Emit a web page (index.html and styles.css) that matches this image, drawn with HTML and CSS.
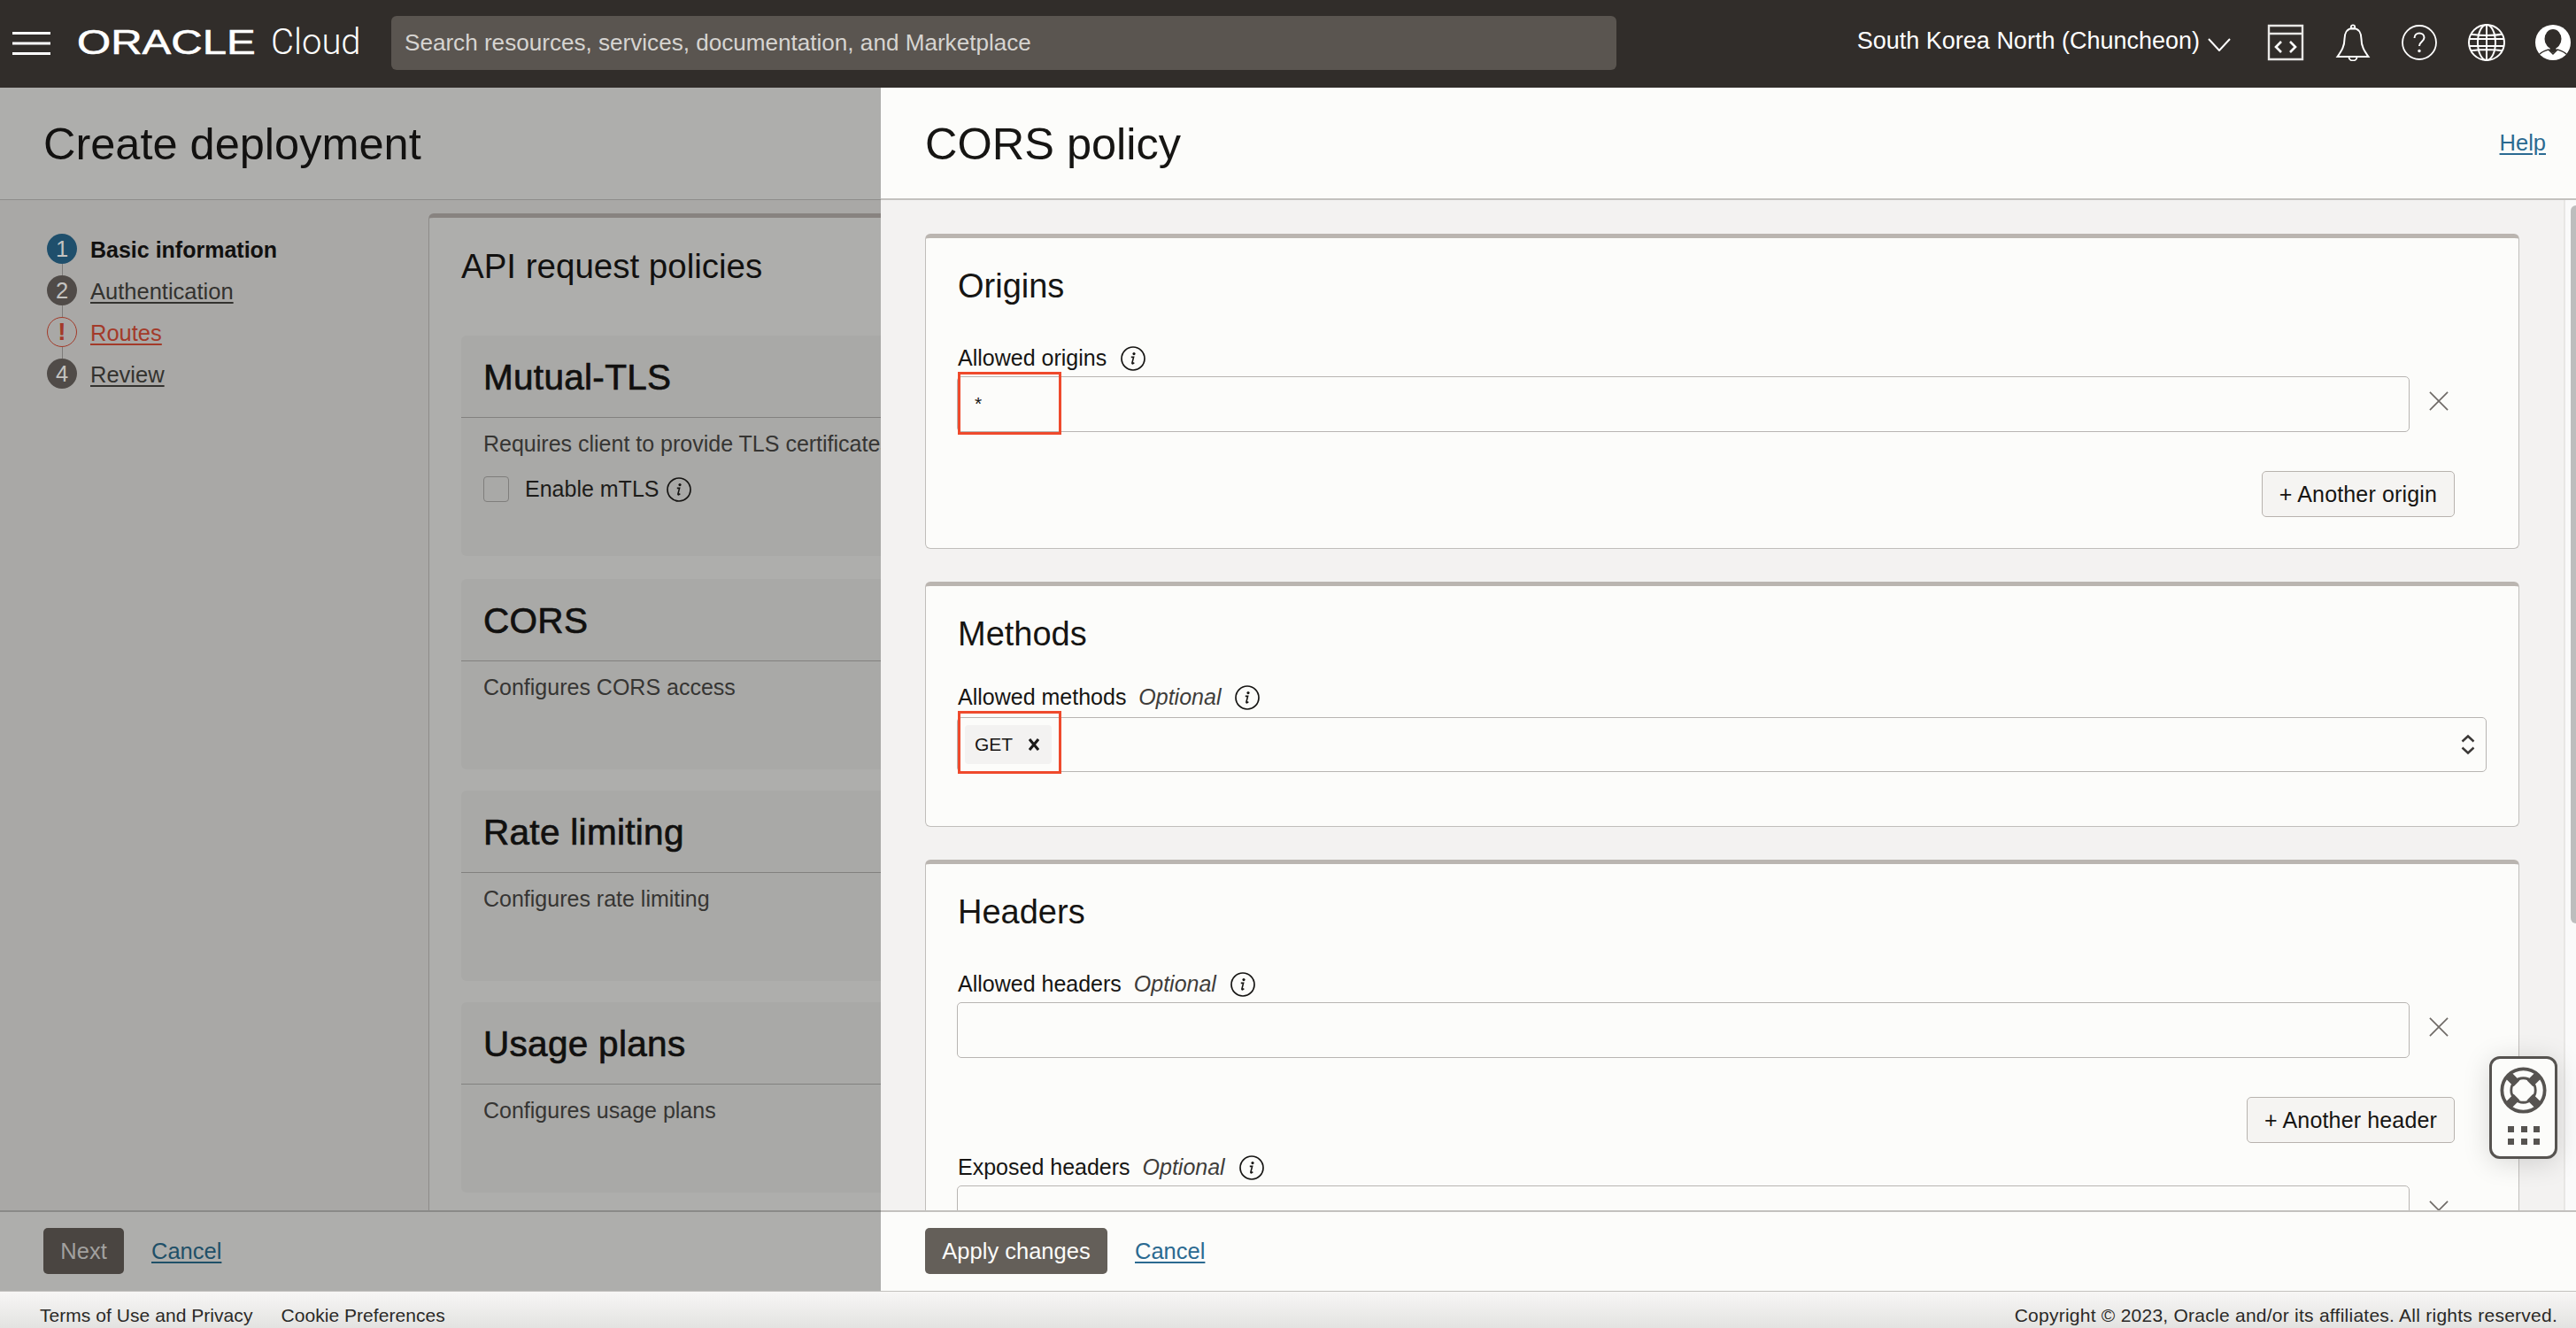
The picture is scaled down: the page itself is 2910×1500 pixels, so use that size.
FILE: index.html
```html
<!DOCTYPE html>
<html lang="en">
<head>
  <meta charset="UTF-8">
  <title>CORS policy</title>
  <link rel="stylesheet" href="styles.css">
</head>
<body>

  <!-- shared icons -->
  <svg class="icon-defs" xmlns="http://www.w3.org/2000/svg">
    <symbol id="icon-info" viewBox="0 0 28 28">
      <circle cx="14" cy="14" r="13" fill="none" stroke="currentColor" stroke-width="1.7"/>
      <circle cx="15" cy="8.600" r="1.600" fill="currentColor"/>
      <path d="M11.800 12.400h2.800l-1.700 6.600c-.2.900.5 1.100 1.100.7l1.300-1" fill="none" stroke="currentColor" stroke-width="1.600"/>
    </symbol>
    <symbol id="icon-close" viewBox="0 0 24 24">
      <path d="M1 1l22 22M23 1L1 23" fill="none" stroke="currentColor" stroke-width="1.8"/>
    </symbol>
  </svg>

  <header class="topbar">
    <svg class="menu-icon" viewBox="0 0 43 26" aria-hidden="true">
      <path d="M0 1.500h43M0 13h43M0 24.500h43" stroke="#fff" stroke-width="3"/>
    </svg>
    <div class="logo">
      <span class="logo-oracle">ORACLE</span>
      <span class="logo-cloud">Cloud</span>
    </div>
    <div class="search">Search resources, services, documentation, and Marketplace</div>
    <div class="region">South Korea North (Chuncheon)</div>
    <svg class="region-chevron" viewBox="0 0 26 15" aria-hidden="true">
      <path d="M1 1l12 13L25 1" fill="none" stroke="#fff" stroke-width="2"/>
    </svg>
    <div class="topbar-icons">
      <svg viewBox="0 0 42 42" aria-hidden="true">
        <path d="M2 2h38v38H2zM2 11h38" fill="none" stroke="#e8e7e5" stroke-width="2.400"/>
        <path d="M16 20l-6 6 6 6M26 20l6 6-6 6" fill="none" stroke="#fff" stroke-width="2.600"/>
      </svg>
      <svg viewBox="0 0 42 42" aria-hidden="true">
        <path d="M21 5c7 0 9.500 6 9.500 12 0 8 3 13 8 20H3.500c5-7 8-12 8-20 0-6 2.500-12 9.500-12z" fill="none" stroke="#fff" stroke-width="2"/>
        <circle cx="21" cy="3.500" r="2.200" fill="none" stroke="#fff" stroke-width="1.800"/>
        <path d="M16.500 37.500a4.500 4 0 0 0 9 0" fill="none" stroke="#fff" stroke-width="1.800"/>
      </svg>
      <svg viewBox="0 0 42 42" aria-hidden="true">
        <circle cx="21" cy="21" r="19" fill="none" stroke="#fff" stroke-width="1.800"/>
        <path d="M15.500 16c0-3.500 2.500-5.500 5.500-5.500s5.500 2 5.500 5c0 4.500-5.500 4.500-5.500 9.500" fill="none" stroke="#fff" stroke-width="2"/>
        <circle cx="21" cy="30.500" r="1.700" fill="#fff"/>
      </svg>
      <svg viewBox="0 0 42 42" aria-hidden="true">
        <g fill="none" stroke="#fff" stroke-width="2">
          <circle cx="21" cy="21" r="20"/>
          <ellipse cx="21" cy="21" rx="10" ry="20"/>
          <path d="M21 1v40M3 11.500c10 2 26 2 36 0M1.200 17h39.600M1.200 25h39.600M3 30.500c10-2 26-2 36 0"/>
        </g>
      </svg>
      <svg viewBox="0 0 42 42" aria-hidden="true">
        <circle cx="21" cy="21" r="20" fill="#fff"/>
        <ellipse cx="21" cy="17" rx="9.500" ry="11" fill="#312d2a"/>
        <path d="M18 26h6l1 4-4 3-4-3z" fill="#312d2a"/>
        <path d="M6 34c3-3 7-4 10-5l5 5 5-5c3 1 7 2 10 5" fill="none" stroke="#312d2a" stroke-width="1.500"/>
      </svg>
    </div>
  </header>

  <div class="workspace">

    <!-- page behind the drawer, dimmed -->
    <section class="wizard">
      <div class="wizard-title">
        <h1>Create deployment</h1>
      </div>
      <div class="wizard-body">
        <ol class="steps">
          <li class="step step-current"><span class="step-dot">1</span><span class="step-name">Basic information</span></li>
          <li class="step"><span class="step-dot">2</span><a class="step-name">Authentication</a></li>
          <li class="step step-error"><span class="step-dot">!</span><a class="step-name">Routes</a></li>
          <li class="step"><span class="step-dot">4</span><a class="step-name">Review</a></li>
        </ol>
        <div class="wizard-card">
          <h2 class="wizard-card-title">API request policies</h2>
          <div class="policy policy-mtls">
            <h3>Mutual-TLS</h3>
            <p>Requires client to provide TLS certificates</p>
            <div class="check-row">
              <span class="checkbox"></span>
              <span>Enable mTLS</span>
              <svg class="info-icon"><use href="#icon-info"/></svg>
            </div>
          </div>
          <div class="policy">
            <h3>CORS</h3>
            <p>Configures CORS access</p>
          </div>
          <div class="policy">
            <h3>Rate limiting</h3>
            <p>Configures rate limiting</p>
          </div>
          <div class="policy">
            <h3>Usage plans</h3>
            <p>Configures usage plans</p>
          </div>
        </div>
      </div>
      <div class="wizard-actions">
        <button class="btn-dark btn-next">Next</button>
        <a class="cancel-link">Cancel</a>
      </div>
    </section>

    <!-- CORS drawer -->
    <section class="drawer">
      <div class="drawer-head">
        <h1>CORS policy</h1>
        <a class="help-link">Help</a>
      </div>

      <div class="drawer-scroll">
        <div class="drawer-content">

          <div class="card">
            <h2>Origins</h2>
            <div class="field-label">Allowed origins <svg class="info-icon"><use href="#icon-info"/></svg></div>
            <div class="input-row">
              <div class="input">*</div>
              <svg class="remove-icon"><use href="#icon-close"/></svg>
              <span class="callout"></span>
            </div>
            <div class="add-row"><button class="btn-add">+ Another origin</button></div>
          </div>

          <div class="card card-methods">
            <h2>Methods</h2>
            <div class="field-label">Allowed methods <em>Optional</em> <svg class="info-icon"><use href="#icon-info"/></svg></div>
            <div class="select">
              <span class="chip">GET
                <svg class="chip-x" viewBox="0 0 12 14"><path d="M1 1l10 12M11 1L1 13" fill="none" stroke="#1c1b1a" stroke-width="3"/></svg>
              </span>
              <svg class="select-arrows" viewBox="0 0 16 24" aria-hidden="true">
                <path d="M1.500 8.500L8 2.500l6.500 6M1.500 15.500L8 21.500l6.500-6" fill="none" stroke="#3b3836" stroke-width="2.400"/>
              </svg>
              <span class="callout"></span>
            </div>
          </div>

          <div class="card">
            <h2>Headers</h2>
            <div class="field-label">Allowed headers <em>Optional</em> <svg class="info-icon"><use href="#icon-info"/></svg></div>
            <div class="input-row">
              <div class="input"></div>
              <svg class="remove-icon"><use href="#icon-close"/></svg>
            </div>
            <div class="add-row"><button class="btn-add">+ Another header</button></div>
            <div class="field-label field-label-next">Exposed headers <em>Optional</em> <svg class="info-icon"><use href="#icon-info"/></svg></div>
            <div class="input-row">
              <div class="input"></div>
              <svg class="remove-icon"><use href="#icon-close"/></svg>
            </div>
          </div>

        </div>
        <div class="scrollbar"><div class="scrollbar-thumb"></div></div>
      </div>

      <div class="drawer-actions">
        <button class="btn-dark btn-apply">Apply changes</button>
        <a class="cancel-link">Cancel</a>
      </div>
    </section>
  </div>

  <footer class="page-footer">
    <a>Terms of Use and Privacy</a>
    <a>Cookie Preferences</a>
    <span class="copyright">Copyright © 2023, Oracle and/or its affiliates. All rights reserved.</span>
  </footer>

  <!-- floating help widget -->
  <div class="help-widget">
    <svg class="buoy" viewBox="0 0 56 56" aria-hidden="true">
      <circle cx="28" cy="28" r="25.500" fill="none" stroke="#565350" stroke-width="4"/>
      <circle cx="28" cy="28" r="14.500" fill="none" stroke="#565350" stroke-width="3"/>
      <path d="M10 10l10 10M46 10L36 20M10 46l10-10M46 46L36 36" stroke="#565350" stroke-width="10"/>
    </svg>
    <div class="widget-dots">
      <i></i><i></i><i></i><i></i><i></i><i></i>
    </div>
  </div>

</body>
</html>
```

FILE: styles.css
```css
* {
  box-sizing: border-box;
}

body {
  margin: 0;
  width: 100%;
  height: 100vh;
  overflow: hidden;
  position: relative;
  display: flex;
  flex-direction: column;
  font-family: "Liberation Sans", Arial, sans-serif;
  font-size: 25.500px;
  color: #161513;
  background: #fcfcfa;
}

h1, h2, h3, p {
  margin: 0;
  font-weight: normal;
}

.icon-defs {
  display: none;
}

/* top bar */
.topbar {
  height: 99px;
  flex: none;
  display: flex;
  align-items: center;
  background: #312d2a;
  color: #fff;
  padding-left: 14px;
  padding-right: 5px;
}

.menu-icon {
  width: 43px;
  height: 26px;
  margin-top: -2px;
}

.logo {
  display: flex;
  align-items: baseline;
  margin-left: 30px;
  width: 355px;
  margin-top: -3px;
}

.logo-oracle {
  font-size: 38px;
  line-height: 40px;
  width: 219px;
  display: inline-block;
  transform: scaleX(1.29);
  transform-origin: left center;
  -webkit-text-stroke: 0.6px #fff;
}

.logo-cloud {
  font-family: Roboto, "Liberation Sans", sans-serif;
  font-weight: 300;
  font-size: 40px;
  line-height: 40px;
}

.search {
  width: 1384px;
  height: 61px;
  line-height: 60px;
  padding-left: 15px;
  background: #5a5550;
  border-radius: 6px;
  color: #d6d4d1;
  font-size: 26.100px;
  margin-top: -2px;
}

.region {
  margin-left: auto;
  font-size: 27px;
  margin-top: -6px;
}

.region-chevron {
  width: 26px;
  height: 15px;
  margin-left: 9px;
  margin-right: 41px;
  margin-top: 2px;
}

.topbar-icons {
  display: flex;
  gap: 33.500px;
  margin-top: -3px;
}

.topbar-icons svg {
  width: 42px;
  height: 42px;
}

/* main split */
.workspace {
  height: 1359px;
  flex: none;
  display: flex;
}

/* wizard behind the drawer */
.wizard {
  width: 995px;
  flex: none;
  display: flex;
  flex-direction: column;
  overflow: hidden;
  background: #aeaeac;
}

.wizard-title {
  height: 127px;
  flex: none;
  padding: 37px 0 0 49px;
  border-bottom: 1px solid #8e8d8b;
}

.wizard-title h1 {
  font-size: 50.500px;
  line-height: 54px;
  color: #121110;
}

.wizard-body {
  flex: 1;
  min-height: 0;
  display: flex;
  overflow: hidden;
  background: #a9a8a6;
}

.steps {
  list-style: none;
  margin: 0;
  padding: 38px 0 0 53px;
  width: 484px;
  flex: none;
}

.step {
  height: 47px;
  display: flex;
  position: relative;
  line-height: 36px;
}

.step:not(:last-child)::after {
  content: "";
  position: absolute;
  left: 17px;
  top: 34px;
  width: 1px;
  height: 13px;
  background: #7d7b79;
}

.step-dot {
  width: 34px;
  height: 34px;
  flex: none;
  border-radius: 50%;
  background: #504b48;
  color: #c4c3c1;
  text-align: center;
  line-height: 34px;
  margin-right: 15px;
}

.step-name {
  color: #33322f;
  text-decoration: underline;
  text-underline-offset: 3px;
}

.step-current .step-dot {
  background: #1f4f6c;
}

.step-current .step-name {
  color: #11100f;
  font-size: 25px;
  font-weight: bold;
  text-decoration: none;
}

.step-error .step-dot {
  background: none;
  border: 1px solid #a33a29;
  color: #a33a29;
  font-weight: bold;
  font-size: 28px;
  line-height: 31px;
}

.step-error .step-name {
  color: #a33a29;
}

.wizard-card {
  width: 1500px;
  flex: none;
  margin-top: 15px;
  padding-left: 36px;
  background: #aeaeac;
  border-left: 1px solid #8d8b89;
  border-top: 5px solid #888380;
  border-top-left-radius: 6px;
}

.wizard-card-title {
  font-size: 38.500px;
  line-height: 44px;
  margin-top: 33px;
  margin-bottom: 56px;
  color: #121110;
}

.policy {
  width: 1200px;
  height: 215px;
  margin-bottom: 24px;
  background: #a9a9a7;
  border-radius: 6px;
  font-size: 25px;
  color: #363533;
}

.policy-mtls {
  height: 249px;
  margin-bottom: 26px;
}

.policy h3 {
  height: 93px;
  padding: 23px 0 0 25px;
  font-size: 40.500px;
  line-height: 48px;
  color: #11100f;
  -webkit-text-stroke: 0.7px #11100f;
  letter-spacing: 0.3px;
  border-bottom: 1px solid #82817f;
}

.policy p {
  padding: 14px 0 0 25px;
  line-height: 30px;
}

.check-row {
  display: flex;
  align-items: center;
  margin-top: 22px;
  padding-left: 25px;
  color: #1d1c1a;
}

.checkbox {
  width: 29px;
  height: 29px;
  margin-right: 18px;
  border: 1px solid #7f7e7c;
  border-radius: 4px;
}

.info-icon {
  width: 28px;
  height: 28px;
  margin-left: 9px;
  vertical-align: -6px;
  color: #161513;
}

.wizard-actions {
  height: 91px;
  flex: none;
  display: flex;
  align-items: flex-start;
  padding: 18px 0 0 49px;
  border-top: 2px solid #8a8a88;
}

.btn-dark {
  height: 52px;
  border: none;
  border-radius: 5px;
  font: inherit;
  padding: 0;
}

.btn-next {
  width: 91px;
  background: #4a4541;
  color: #a2a19f;
}

.btn-apply {
  width: 206px;
  background: #645f59;
  color: #fcfcfa;
}

.cancel-link {
  margin-left: 31px;
  line-height: 52px;
  color: #1f5068;
  text-decoration: underline;
  text-underline-offset: 3px;
}

/* drawer */
.drawer {
  flex: 1;
  min-width: 0;
  display: flex;
  flex-direction: column;
  background: #fcfcfa;
}

.drawer-head {
  height: 127px;
  flex: none;
  display: flex;
  justify-content: space-between;
  padding: 37px 34px 0 50px;
  border-bottom: 2px solid #c3c1be;
}

.drawer-head h1 {
  font-size: 50.500px;
  line-height: 54px;
}

.help-link {
  color: #2b6a91;
  text-decoration: underline;
  text-underline-offset: 3px;
  margin-top: 11px;
}

.drawer-scroll {
  flex: 1;
  min-height: 0;
  display: flex;
  background: #f3f2f1;
}

.drawer-content {
  flex: 1;
  min-width: 0;
  overflow: hidden;
  padding: 38px 0 0 50px;
}

.scrollbar {
  width: 14px;
  flex: none;
  padding: 6px 0 0 6px;
  background: #fafafa;
  border-left: 2px solid #e8e7e5;
}

.scrollbar-thumb {
  width: 6px;
  height: 811px;
  background: #bdbdbd;
  border-radius: 6px 0 0 6px;
}

.card {
  width: 1801px;
  margin-bottom: 37px;
  padding: 32px 36px 35px 35px;
  background: #fcfcfa;
  border: 1px solid #c0bebb;
  border-top: 5px solid #bab5b0;
  border-radius: 6px;
  font-size: 25px;
}

.card h2 {
  font-size: 38px;
  line-height: 44px;
  margin-bottom: 45px;
  padding-left: 1px;
}

.card-methods {
  padding-bottom: 61px;
}

.card-methods h2 {
  margin-bottom: 35px;
}

.field-label {
  line-height: 28px;
  height: 28px;
  margin-bottom: 7px;
  padding-left: 1px;
}

.field-label em {
  color: #3f3d3a;
  margin-left: 7px;
}

.card-methods .field-label {
  margin-bottom: 9px;
}

.field-label-next {
  margin-top: 13px;
}

.input-row {
  position: relative;
  display: flex;
  align-items: flex-start;
}

.input {
  width: 1641px;
  height: 63px;
  flex: none;
  padding-left: 19px;
  font-size: 21px;
  line-height: 60px;
  border: 1px solid #b8b5b2;
  border-radius: 5px;
  background: #fcfcfa;
}

.remove-icon {
  width: 22px;
  height: 22px;
  flex: none;
  margin: 17px 0 0 22px;
  color: #6f6a66;
}

.add-row {
  display: flex;
  justify-content: flex-end;
  padding-right: 36px;
  margin-top: 44px;
}

.btn-add {
  height: 52px;
  padding: 0 19px;
  font: inherit;
  letter-spacing: 0.15px;
  color: #161513;
  background: #f5f4f2;
  border: 1px solid #b8b3ae;
  border-radius: 5px;
}

.select {
  position: relative;
  height: 62px;
  display: flex;
  align-items: center;
  justify-content: space-between;
  padding: 0 12px 0 8px;
  border: 1px solid #b8b5b2;
  border-radius: 5px;
}

.chip {
  width: 98px;
  height: 44px;
  display: flex;
  align-items: center;
  padding-left: 11px;
  font-size: 21px;
  background: #f3f2f1;
  border-radius: 4px;
}

.chip-x {
  width: 12px;
  height: 14px;
  margin-left: 18px;
}

.select-arrows {
  width: 16px;
  height: 24px;
}

/* red markers from the tutorial */
.callout {
  position: absolute;
  left: 1px;
  top: -5px;
  width: 117px;
  height: 71px;
  border: 3px solid #ef4a2c;
}

.select .callout {
  left: 0;
  top: -8px;
}

.drawer-actions {
  height: 91px;
  flex: none;
  display: flex;
  align-items: flex-start;
  padding: 18px 0 0 50px;
  border-top: 2px solid #c3c1be;
}

.drawer-actions .cancel-link {
  color: #2b6a91;
}

/* page footer */
.page-footer {
  flex: 1;
  display: flex;
  padding: 15px 21px 0 45px;
  font-size: 21px;
  line-height: 24px;
  color: #2a2927;
  border-top: 1px solid #c3c1be;
  background: linear-gradient(#f7f6f5, #e3e3e1);
}

.page-footer a {
  margin-right: 32px;
  letter-spacing: 0.05px;
}

.copyright {
  margin-left: auto;
  letter-spacing: 0.25px;
}

/* floating widget */
.help-widget {
  position: absolute;
  left: 2812px;
  top: 1193px;
  width: 77px;
  height: 116px;
  padding: 9px 0 0 9px;
  background: #fcfcfa;
  border: 3px solid #565350;
  border-radius: 12px;
  box-shadow: 0 4px 30px rgba(0, 0, 0, 0.15);
}

.buoy {
  display: block;
  width: 53px;
  height: 53px;
}

.widget-dots {
  display: grid;
  grid-template-columns: repeat(3, 7px);
  gap: 7px 7.500px;
  margin: 14px 0 0 9px;
}

.widget-dots i {
  height: 7px;
  background: #565350;
}
```
